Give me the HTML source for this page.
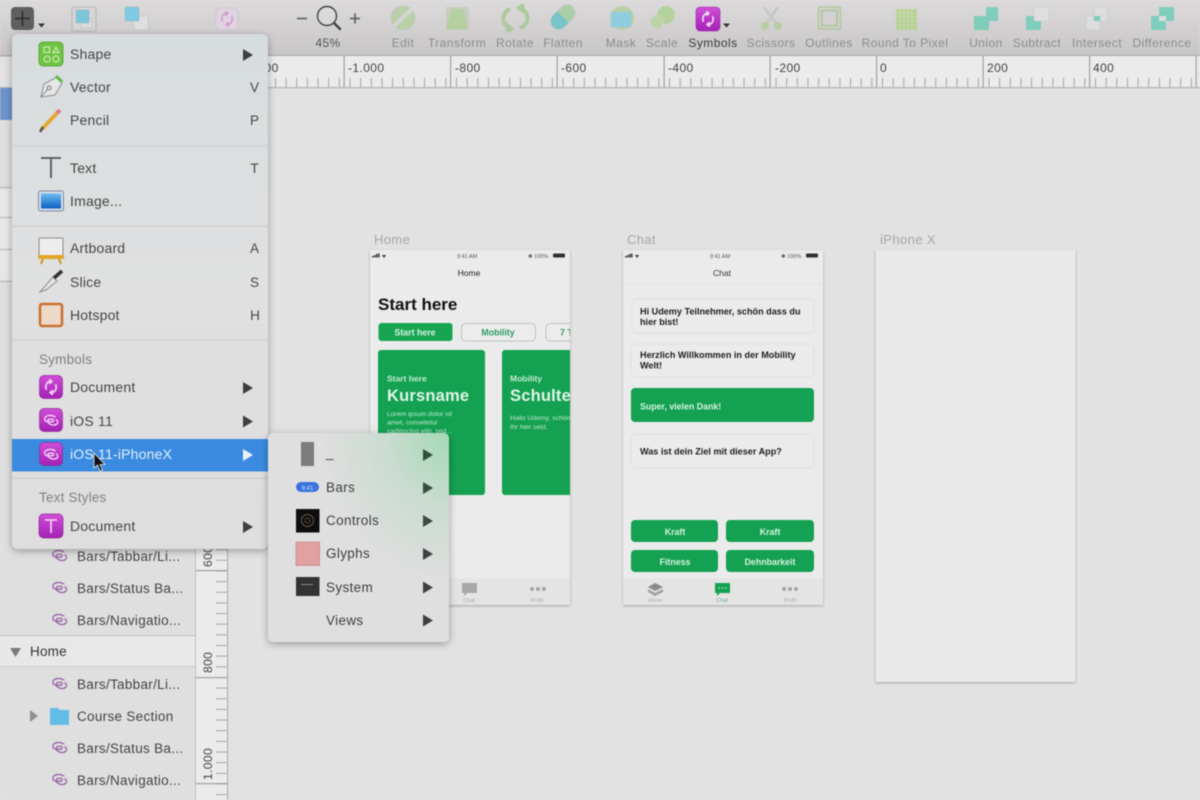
<!DOCTYPE html>
<html><head><meta charset="utf-8"><style>
html,body{margin:0;padding:0;width:1200px;height:800px;overflow:hidden;background:#e2e2e2}
svg{display:block;filter:blur(.45px)}
text{font-family:"Liberation Sans",sans-serif}
.tb{font-size:12px;fill:#8d8d8d;text-anchor:middle;letter-spacing:.45px}
.rl{font-size:12px;fill:#444;letter-spacing:.4px}
.m{font-size:14px;fill:#454545;letter-spacing:.2px}
.k{font-size:13.5px;fill:#454545;text-anchor:middle}
.h{font-size:13.5px;fill:#808080;letter-spacing:.2px}
.s{font-size:13.5px;fill:#3f3f3f;letter-spacing:.35px}
.ab{font-size:13px;fill:#a6a6a6;letter-spacing:.4px}
.cb{font-size:9.1px;font-weight:bold;fill:#1d1d1d}
.gb{font-size:8.8px;font-weight:bold;fill:#d6f2df;text-anchor:middle}
.st{font-size:5.5px;fill:#555}
.tl{font-size:5.5px;fill:#aaa;text-anchor:middle}
</style></head><body>
<svg width="1200" height="800" viewBox="0 0 1200 800" xmlns="http://www.w3.org/2000/svg">
<defs>
<clipPath id="homeclip"><rect x="370" y="250" width="200" height="355"/></clipPath>
<linearGradient id="tbg" x1="0" y1="0" x2="0" y2="1"><stop offset="0" stop-color="#dcdadb"/><stop offset="1" stop-color="#c8c6c7"/></linearGradient>
<linearGradient id="menu" x1="0" y1="0" x2="0" y2="1"><stop offset="0" stop-color="#d7dcdf"/><stop offset=".25" stop-color="#dcdfe0"/><stop offset=".5" stop-color="#e0e0e0"/><stop offset="1" stop-color="#dedede"/></linearGradient>
<radialGradient id="sub" cx="1" cy="0" r=".72"><stop offset="0" stop-color="#a3d9b5"/><stop offset=".5" stop-color="#cbdcd1"/><stop offset="1" stop-color="#dfdfdf"/></radialGradient>
<linearGradient id="pur" x1="0" y1="0" x2="0" y2="1"><stop offset="0" stop-color="#d04fd8"/><stop offset="1" stop-color="#a521b5"/></linearGradient>
<linearGradient id="sea" x1="0" y1="0" x2="0" y2="1"><stop offset="0" stop-color="#6ebdf0"/><stop offset="1" stop-color="#0a5fc4"/></linearGradient>
<pattern id="hticks" x="8.7" y="0" width="10.65" height="40" patternUnits="userSpaceOnUse"><rect width="1" height="40" fill="#a5a5a5"/></pattern>
<pattern id="vticks" x="0" y="6" width="40" height="10.65" patternUnits="userSpaceOnUse"><rect width="40" height="1" fill="#a5a5a5"/></pattern>
<filter id="sh" x="-15%" y="-15%" width="130%" height="130%"><feDropShadow dx="0" dy="2" stdDeviation="4" flood-color="#000" flood-opacity=".33"/></filter>
<filter id="sh2" x="-5%" y="-5%" width="110%" height="110%"><feDropShadow dx="0" dy="1" stdDeviation="1.2" flood-color="#000" flood-opacity=".28"/></filter>
<symbol id="arrow" viewBox="0 0 10 12"><path d="M0 0L10 6L0 12Z"/></symbol>
<symbol id="swirl" viewBox="0 0 18 14"><path d="M13.500 3.200C11 1.200 5.500 1 3 3.200C.8 5.200 1.800 8 5 8.800H10.500C12 8.800 12.500 6.200 10.500 5.800H7.500C5 5.800 4.800 8.800 7 10.700C9.500 12.900 14 13 16 10.800C17.200 9.400 16.600 7.300 14.800 6.500" fill="none" stroke="currentColor" stroke-width="1.500" stroke-linecap="round"/></symbol>
<symbol id="psym" viewBox="0 0 24 24"><rect x=".5" y=".5" width="23" height="23" rx="4.500" fill="url(#pur)" stroke="#8e2b97" stroke-width=".7"/><g color="#f4d6f6"><use href="#swirl" x="4" y="6" width="16" height="12.500"/></g></symbol>
<symbol id="loop" viewBox="0 0 24 24"><path d="M7 15C5 10 8 5.500 12 6M10 3.500L13 6L10 8.500M17 9C19 14 16 18.500 12 18M14 20.500L11 18L14 15.500" fill="none" stroke="currentColor" stroke-width="1.800"/></symbol>
</defs>

<!-- canvas -->
<rect width="1200" height="800" fill="#e2e2e2"/>

<!-- toolbar -->
<rect width="1200" height="55" fill="url(#tbg)"/>
<rect y="55" width="1200" height="1.500" fill="#ababab"/>

<!-- horizontal ruler -->
<rect x="195" y="56" width="1005" height="32" fill="#ebebeb"/>
<rect x="195" y="78" width="1005" height="9" fill="url(#hticks)"/>
<rect x="0" y="87" width="1200" height="1.200" fill="#b3b3b3"/>
<g fill="#a0a0a0">
<rect x="237" y="56" width="1.200" height="32"/><rect x="343.500" y="56" width="1.200" height="32"/><rect x="450" y="56" width="1.200" height="32"/><rect x="556.500" y="56" width="1.200" height="32"/><rect x="663.500" y="56" width="1.200" height="32"/><rect x="769.500" y="56" width="1.200" height="32"/><rect x="876" y="56" width="1.200" height="32"/><rect x="982.500" y="56" width="1.200" height="32"/><rect x="1089" y="56" width="1.200" height="32"/><rect x="1195.500" y="56" width="1.200" height="32"/>
</g>
<g class="rl">
<text class="rl" x="348" y="72">-1.000</text><text class="rl" x="455" y="72">-800</text><text class="rl" x="561" y="72">-600</text><text class="rl" x="668" y="72">-400</text><text class="rl" x="775" y="72">-200</text><text class="rl" x="880" y="72" fill="#222">0</text><text class="rl" x="987" y="72">200</text><text class="rl" x="1093" y="72">400</text><text class="rl" x="264.500" y="72">00</text>
</g>

<!-- sidebar -->
<rect x="0" y="88" width="195" height="712" fill="#dfdfdf"/>
<rect x="0" y="88" width="12" height="32" fill="#6e93cc"/>
<rect x="0" y="189" width="12" height="29" fill="#e7e7e7"/>
<rect x="0" y="218" width="12" height="31" fill="#e7e7e7"/>
<rect x="0" y="250" width="12" height="30" fill="#e7e7e7"/>
<rect x="0" y="187" width="12" height="1" fill="#b0b0b0"/><rect x="0" y="217" width="12" height="1" fill="#b0b0b0"/><rect x="0" y="249" width="12" height="1" fill="#b0b0b0"/><rect x="0" y="281" width="12" height="1" fill="#b0b0b0"/>
<rect x="0" y="636" width="195" height="30" fill="#e8e8e8"/>
<rect x="0" y="635" width="195" height="1.200" fill="#c4c4c4"/>
<rect x="0" y="666" width="195" height="1" fill="#cdcdcd"/>
<path d="M10 648H21L15.500 657Z" fill="#7a7a7a"/>
<text x="30" y="656" style="font-size:13.500px;fill:#333;letter-spacing:.2px">Home</text>
<g color="#9b6aa8">
<use href="#swirl" x="51" y="549" width="17" height="13"/>
<use href="#swirl" x="51" y="581" width="17" height="13"/>
<use href="#swirl" x="51" y="613" width="17" height="13"/>
<use href="#swirl" x="51" y="677" width="17" height="13"/>
<use href="#swirl" x="51" y="741" width="17" height="13"/>
<use href="#swirl" x="51" y="773" width="17" height="13"/>
</g>
<g style="font-size:13.500px;fill:#444;letter-spacing:.3px">
<text x="77" y="561">Bars/Tabbar/Li...</text>
<text x="77" y="593">Bars/Status Ba...</text>
<text x="77" y="625">Bars/Navigatio...</text>
<text x="77" y="689">Bars/Tabbar/Li...</text>
<text x="77" y="721">Course Section</text>
<text x="77" y="753">Bars/Status Ba...</text>
<text x="77" y="785">Bars/Navigatio...</text>
</g>
<path d="M30 710L38 716L30 722Z" fill="#8f8f8f"/>
<path d="M50 708H58L60 710H69V725H50Z" fill="#62bde6"/>

<!-- vertical ruler -->
<rect x="195" y="88" width="32" height="712" fill="#ebebeb"/>
<rect x="216" y="88" width="11" height="712" fill="url(#vticks)"/>
<rect x="195" y="88" width="1" height="712" fill="#c2c2c2"/>
<rect x="227" y="88" width="1.200" height="712" fill="#b3b3b3"/>
<rect x="195" y="570" width="32" height="1.200" fill="#a0a0a0"/>
<rect x="195" y="677" width="32" height="1.200" fill="#a0a0a0"/>
<rect x="195" y="783" width="32" height="1.200" fill="#a0a0a0"/>
<text class="rl" transform="translate(212 567) rotate(-90)">600</text>
<text class="rl" transform="translate(212 673) rotate(-90)">800</text>
<text class="rl" transform="translate(212 780) rotate(-90)">1.000</text>

<!-- artboard titles -->
<text class="ab" x="374" y="244">Home</text>
<text class="ab" x="627" y="244">Chat</text>
<text class="ab" x="880" y="244">iPhone X</text>

<!-- Home artboard -->
<rect x="370" y="250" width="200" height="355" fill="#ebebeb" filter="url(#sh2)"/>
<g clip-path="url(#homeclip)">
<g fill="#333"><rect x="372" y="256" width="1.500" height="1.500"/><rect x="374" y="255" width="1.500" height="2.500"/><rect x="376" y="254" width="1.500" height="3.500"/><rect x="378" y="253.500" width="1.500" height="4"/><path d="M382 255L386 255L384 258Z"/><rect x="553" y="253.500" width="12" height="4" rx="1"/></g>
<text class="st" x="457" y="258">9:41 AM</text>
<text class="st" x="528" y="258">✱ 100%</text>
<text x="469" y="276" style="font-size:8.500px;fill:#222;text-anchor:middle">Home</text>
<text x="378" y="310" style="font-size:17px;font-weight:bold;fill:#111">Start here</text>
<rect x="378.500" y="323" width="74" height="18" rx="3" fill="#17a554"/>
<text class="gb" x="415" y="335.500">Start here</text>
<rect x="461.500" y="323.500" width="74" height="17.500" rx="4" fill="#ececec" stroke="#b9c4bd"/>
<text x="498" y="335.500" style="font-size:8.800px;font-weight:bold;fill:#2c9a62;text-anchor:middle">Mobility</text>
<path d="M572 323.500H550a4 4 0 0 0-4 4v9.500a4 4 0 0 0 4 4H572" fill="#ececec" stroke="#b9c4bd"/>
<text x="560" y="335.500" style="font-size:8.800px;font-weight:bold;fill:#2c9a62">7 T</text>
<rect x="378" y="350" width="107" height="145" rx="3" fill="#14a151"/>
<path d="M572 350H505a3 3 0 0 0-3 3V492a3 3 0 0 0 3 3H572Z" fill="#14a151"/>
<text x="387" y="381.500" style="font-size:8.500px;font-weight:bold;fill:#c2ebd0">Start here</text>
<text x="387" y="401" style="font-size:16.500px;font-weight:bold;fill:#dff5e7;letter-spacing:.2px">Kursname</text>
<g style="font-size:6.800px;fill:#bfe7cd"><text x="387" y="416">Lorem ipsum dolor sit</text><text x="387" y="424.500">amet, consetetur</text><text x="387" y="433">sadipscing elitr, sed...</text></g>
<text x="510" y="381.500" style="font-size:8.500px;font-weight:bold;fill:#c2ebd0">Mobility</text>
<text x="510" y="401" style="font-size:16.500px;font-weight:bold;fill:#dff5e7;letter-spacing:.2px">Schulter</text>
<g style="font-size:6.800px;fill:#bfe7cd"><text x="510" y="420">Hallo Udemy, schön</text><text x="510" y="429">Ihr hier seid.</text></g>
<rect x="370" y="578" width="200" height="27" fill="#e4e4e4"/>
<path d="M462 583h15v10h-10l-3 3v-3h-2z" fill="#a8a8a8"/>
<text class="tl" x="469" y="602">Chat</text>
<g fill="#a5a5a5"><circle cx="532" cy="589" r="2"/><circle cx="538" cy="589" r="2"/><circle cx="544" cy="589" r="2"/></g>
<text class="tl" x="537" y="602">Profil</text>
</g>

<!-- Chat artboard -->
<rect x="623" y="250" width="200" height="355" fill="#ebebeb" filter="url(#sh2)"/>
<g fill="#333"><rect x="625" y="256" width="1.500" height="1.500"/><rect x="627" y="255" width="1.500" height="2.500"/><rect x="629" y="254" width="1.500" height="3.500"/><rect x="631" y="253.500" width="1.500" height="4"/><path d="M635 255L639 255L637 258Z"/><rect x="806" y="253.500" width="12" height="4" rx="1"/></g>
<text class="st" x="710" y="258">9:41 AM</text>
<text class="st" x="781" y="258">✱ 100%</text>
<text x="722" y="276" style="font-size:8.500px;fill:#333;text-anchor:middle">Chat</text>
<rect x="623" y="284" width="200" height="1" fill="#e2e2e2"/>
<rect x="632" y="299" width="182" height="34" rx="4" fill="#ebebeb" stroke="#e1e1e1"/>
<text class="cb" x="640" y="314.500">Hi Udemy Teilnehmer, schön dass du</text>
<text class="cb" x="640" y="325">hier bist!</text>
<rect x="631" y="344" width="183" height="33" rx="4" fill="#ebebeb" stroke="#e1e1e1"/>
<text class="cb" x="640" y="358">Herzlich Willkommen in der Mobility</text>
<text class="cb" x="640" y="368.500">Welt!</text>
<rect x="631" y="388" width="183" height="34" rx="4" fill="#14a151"/>
<text class="gb" x="640" y="409.500" style="text-anchor:start">Super, vielen Dank!</text>
<rect x="631" y="434" width="183" height="34" rx="4" fill="#ebebeb" stroke="#e1e1e1"/>
<text class="cb" x="640" y="454.500">Was ist dein Ziel mit dieser App?</text>
<rect x="631" y="520" width="87" height="22" rx="4" fill="#14a151"/>
<rect x="726" y="520" width="88" height="22" rx="4" fill="#14a151"/>
<rect x="631" y="550" width="87" height="22" rx="4" fill="#14a151"/>
<rect x="726" y="550" width="88" height="22" rx="4" fill="#14a151"/>
<text class="gb" x="675" y="535">Kraft</text><text class="gb" x="770" y="535">Kraft</text>
<text class="gb" x="675" y="565">Fitness</text><text class="gb" x="770" y="565">Dehnbarkeit</text>
<rect x="623" y="578" width="200" height="27" fill="#e4e4e4"/>
<path d="M655 583L663 587L655 591L648 587Z" fill="#8a8a8a"/><path d="M648 589L655 593L663 589V592L655 596L648 592Z" fill="#a0a0a0"/>
<text class="tl" x="655" y="602">Home</text>
<path d="M715 583h15v10h-10l-3 3v-3h-2z" fill="#14a151"/>
<g fill="#c9ecd6"><circle cx="719" cy="588" r=".8"/><circle cx="722.500" cy="588" r=".8"/><circle cx="726" cy="588" r=".8"/></g>
<text class="tl" x="722" y="602" style="fill:#6aa9a0">Chat</text>
<g fill="#a5a5a5"><circle cx="784" cy="589" r="2"/><circle cx="790" cy="589" r="2"/><circle cx="796" cy="589" r="2"/></g>
<text class="tl" x="790" y="602">Profil</text>

<!-- iPhone X artboard -->
<rect x="875.500" y="250" width="200" height="432" fill="#e9e9e9" filter="url(#sh2)"/>

<!-- toolbar icons -->
<rect x="11" y="7" width="23" height="23" rx="4" fill="#5f5f5f"/>
<path d="M22.500 11V26M15 18.500H30" stroke="#2c2c2c" stroke-width="1.600"/>
<path d="M38 23.500H45L41.500 27.500Z" fill="#333"/>
<rect x="72" y="7" width="24" height="24" rx="2" fill="#d6d6d6" stroke="#b5b5b5"/>
<rect x="81" y="18" width="11" height="10" fill="#dcdcdc" stroke="#bbb" stroke-width=".6"/>
<rect x="76" y="10" width="13" height="13" fill="#7cc5dc" stroke="#9ab6bf" stroke-width=".6"/>
<rect x="134" y="16" width="14" height="14" fill="#dedede" stroke="#c4c4c4" stroke-width=".6"/>
<rect x="125" y="7" width="14" height="14" fill="#7ecbe2" stroke="#9bbcc6" stroke-width=".6"/>
<rect x="216" y="8" width="22" height="22" rx="4" fill="#dfd3df" stroke="#cfc6cf"/>
<use href="#loop" x="216" y="8" width="22" height="22" color="#d39bd3"/>
<path d="M297 18.500H307M350 18.500H360M355 13.500V23.500" stroke="#666" stroke-width="1.800"/>
<circle cx="327" cy="16" r="9.500" fill="#dad8d9" stroke="#444" stroke-width="1.400"/>
<path d="M334 23L340 29" stroke="#444" stroke-width="2.600" stroke-linecap="round"/>
<text x="328" y="47" style="font-size:12px;fill:#555;text-anchor:middle;letter-spacing:.3px">45%</text>
<g opacity=".88">
<circle cx="403" cy="18" r="12" fill="#b6cfa2" stroke="#c6c6c6"/><path d="M394 26L412 9" stroke="#d5d5d5" stroke-width="4"/>
<rect x="446" y="7" width="23" height="23" fill="#c5cdbb"/><path d="M452 9H463L468 29H446Z" fill="#b2cf99"/>
<path d="M510 9C502 12 500 24 510 28M520 8C530 12 530 24 520 28M506 24L511 29L506 31M524 5L519 8L524 12" fill="none" stroke="#a9c996" stroke-width="4"/>
<g transform="rotate(-45 563 17)"><rect x="549" y="9" width="28" height="16" rx="8" fill="#a5cda0" stroke="#c4c4c4"/><path d="M549 17a8 8 0 0 1 8-8h6v16h-6a8 8 0 0 1-8-8z" fill="#6cc4c8"/></g>
<circle cx="622" cy="18" r="12" fill="#b4cf9f"/><rect x="611" y="12" width="20" height="15" fill="#86cde0" stroke="#aac6cc" stroke-width=".6"/>
<circle cx="666" cy="15" r="9" fill="#b0d293"/><circle cx="657" cy="22" r="6.500" fill="#b8d49f" stroke="#d0d0d0" stroke-width=".6"/>
</g>
<rect x="696" y="7" width="24" height="24" rx="4" fill="url(#pur)" stroke="#962ba0" stroke-width=".6"/>
<use href="#loop" x="697" y="8" width="22" height="22" color="#f4dcf7"/>
<path d="M723 23.500H730L726.500 27.500Z" fill="#333"/>
<g opacity=".88">
<path d="M764 7L776 23M778 7L767 23" stroke="#c5c5c5" stroke-width="2.500"/><circle cx="765" cy="26" r="4" fill="#b5cd9e"/><circle cx="778" cy="26" r="4" fill="#b5cd9e"/>
<rect x="818.500" y="7" width="22" height="22" fill="#cfd4c7" stroke="#afc59a" stroke-width="1.500"/><rect x="822" y="10.500" width="15" height="15" fill="#d3d1d2" stroke="#a9c192" stroke-width="1.500"/>
<rect x="896" y="9" width="21" height="21" fill="#b4d28c"/>
<path d="M900 9V30M904 9V30M908 9V30M912 9V30M896 13H917M896 17H917M896 21H917M896 25H917" stroke="#d1dbbb" stroke-width=".6"/>
<path d="M986 7h12v14h-9v9H974V16h12z" fill="#74cdb9"/>
<rect x="1026" y="16" width="15" height="14" rx="1" fill="#74cdb9"/><rect x="1034" y="7" width="15" height="14" rx="1" fill="#e0e0e0" stroke="#c9c9c9" stroke-width=".6"/>
<rect x="1086" y="16" width="14" height="14" rx="1" fill="#dedede" stroke="#c5c5c5" stroke-width=".6"/><rect x="1094" y="7" width="14" height="14" rx="1" fill="#dedede" stroke="#c5c5c5" stroke-width=".6"/><rect x="1094" y="16" width="6" height="5" fill="#74cdb9"/>
<rect x="1151" y="16" width="15" height="14" rx="1" fill="#74cdb9"/><rect x="1159" y="7" width="15" height="14" rx="1" fill="#74cdb9"/><rect x="1159" y="16" width="7" height="5" fill="#dedede"/>
</g>
<text class="tb" x="403" y="47">Edit</text>
<text class="tb" x="457" y="47">Transform</text>
<text class="tb" x="515" y="47">Rotate</text>
<text class="tb" x="563" y="47">Flatten</text>
<text class="tb" x="621" y="47">Mask</text>
<text class="tb" x="662" y="47">Scale</text>
<text class="tb" x="713" y="47" style="fill:#3a3a3a">Symbols</text>
<text class="tb" x="771" y="47">Scissors</text>
<text class="tb" x="829" y="47">Outlines</text>
<text class="tb" x="905" y="47">Round To Pixel</text>
<text class="tb" x="986" y="47">Union</text>
<text class="tb" x="1037" y="47">Subtract</text>
<text class="tb" x="1097" y="47">Intersect</text>
<text class="tb" x="1162" y="47">Difference</text>

<!-- main menu -->
<rect x="12" y="34" width="256" height="515" rx="6" fill="url(#menu)" filter="url(#sh)"/>
<g fill="#d0d0d0"><rect x="12" y="145" width="256" height="1.500"/><rect x="12" y="225.500" width="256" height="1.500"/><rect x="12" y="339.500" width="256" height="1.500"/><rect x="12" y="477.500" width="256" height="1.500"/></g>
<rect x="12" y="439" width="256" height="32.500" fill="#3a8be0"/>

<!-- shape -->
<rect x="39" y="42" width="24" height="24" rx="4" fill="#6fc443" stroke="#4f9e2c" stroke-width=".8"/>
<g fill="none" stroke="#d9f0c8" stroke-width="1"><rect x="44" y="47" width="5.500" height="5.500"/><path d="M56 47L59 52.500H53Z"/><circle cx="47" cy="59" r="3"/><circle cx="56" cy="59" r="3"/></g>
<!-- vector -->
<path d="M41 97L44 84L57 77L62 83L55 95Z" fill="#e6e6e6" stroke="#8f8f8f"/><path d="M56 76L62 82" stroke="#5cb84a" stroke-width="3"/><circle cx="49" cy="88" r="2" fill="none" stroke="#777"/><path d="M41 97L48 89" stroke="#777" stroke-width=".8"/>
<!-- pencil -->
<path d="M41.500 129.500L58 112" stroke="#e4a93a" stroke-width="4"/><path d="M40 132L43 127" stroke="#555" stroke-width="2.500"/><path d="M57 113L60 110" stroke="#e07a80" stroke-width="4"/>
<!-- text -->
<path d="M41 158H61M51 158V178" stroke="#555" stroke-width="1.800" fill="none"/>
<!-- image -->
<rect x="38.500" y="191" width="25" height="20" rx="2" fill="#d5dce6" stroke="#7e8aa0"/><rect x="41" y="193.500" width="20" height="15" fill="url(#sea)"/>
<!-- artboard -->
<rect x="39" y="238" width="24" height="19" rx="1" fill="#ededed" stroke="#8a8a8a"/><rect x="38" y="255" width="26" height="4" rx="1" fill="#e2a627"/><path d="M43 259L41 264M59 259L61 264" stroke="#d09520" stroke-width="2"/>
<!-- slice -->
<path d="M40 292L53 277L57 281L46 290Z" fill="#e5e5e5" stroke="#8e8e8e"/><path d="M54 278L62 271" stroke="#333" stroke-width="3.500"/>
<!-- hotspot -->
<rect x="40" y="304" width="22" height="22" rx="2" fill="#ecd9c8" stroke="#c9702f" stroke-width="2.500"/>
<!-- purple -->
<rect x="39.500" y="375.500" width="23" height="23" rx="4.500" fill="url(#pur)" stroke="#8e2b97" stroke-width=".7"/>
<use href="#loop" x="40" y="376" width="22" height="22" color="#f5dcf7"/>
<use href="#psym" x="39" y="408" width="24" height="24"/>
<use href="#psym" x="39" y="442" width="24" height="24"/>
<rect x="39" y="514" width="24" height="24" rx="4.500" fill="url(#pur)" stroke="#8e2b97" stroke-width=".7"/>
<path d="M45 520H57M51 520V533" stroke="#f5dcf7" stroke-width="1.600"/>

<g class="m">
<text class="m" x="70" y="59">Shape</text>
<text class="m" x="70" y="92">Vector</text>
<text class="m" x="70" y="125">Pencil</text>
<text class="m" x="70" y="173">Text</text>
<text class="m" x="70" y="206">Image...</text>
<text class="m" x="70" y="253">Artboard</text>
<text class="m" x="70" y="287">Slice</text>
<text class="m" x="70" y="320">Hotspot</text>
<text class="m" x="70" y="392">Document</text>
<text class="m" x="70" y="426">iOS 11</text>
<text x="70" y="459" style="font-size:14px;fill:#e4f0fb;letter-spacing:.2px">iOS 11-iPhoneX</text>
<text class="m" x="70" y="531">Document</text>
</g>
<text class="h" x="39" y="364">Symbols</text>
<text class="h" x="39" y="502">Text Styles</text>
<text class="k" x="254.500" y="92">V</text>
<text class="k" x="254.500" y="125">P</text>
<text class="k" x="254.500" y="173">T</text>
<text class="k" x="254.500" y="253">A</text>
<text class="k" x="254.500" y="287">S</text>
<text class="k" x="255" y="320">H</text>
<g fill="#3e3e3e">
<use href="#arrow" x="243" y="49" width="10" height="12"/>
<use href="#arrow" x="243" y="382" width="10" height="12"/>
<use href="#arrow" x="243" y="415.500" width="10" height="12"/>
<use href="#arrow" x="243" y="521" width="10" height="12"/>
</g>
<use href="#arrow" x="243" y="449" width="10" height="12" fill="#e8f2fc"/>

<!-- cursor -->
<path d="M94 453V468L97.500 465L100 471L102.500 470L100 464.500H105Z" fill="#111" stroke="#eee" stroke-width=".8"/>

<!-- submenu -->
<rect x="268" y="433" width="181" height="209" rx="5" fill="url(#sub)" filter="url(#sh)"/>
<rect x="301" y="442" width="13" height="24" fill="#7c7c7c"/>
<text x="326" y="457" class="s">_</text>
<rect x="296" y="482" width="23" height="10" rx="5" fill="#3a72e0"/>
<text x="307.500" y="490" style="font-size:6px;fill:#cfe0fa;text-anchor:middle">9:41</text>
<rect x="296" y="509" width="23.500" height="23.500" fill="#0e0e0e"/>
<circle cx="307.500" cy="520.500" r="6" fill="none" stroke="#6d5a48"/><circle cx="307.500" cy="520.500" r="2.500" fill="none" stroke="#6d5a48" stroke-width=".7"/>
<rect x="296" y="542" width="23.500" height="23.500" fill="#e2a1a1" stroke="#c78080" stroke-width=".7"/>
<rect x="296" y="577" width="23.500" height="19" fill="#333"/>
<rect x="301" y="584" width="12" height="1" fill="#888"/>
<g>
<text class="s" x="326" y="492">Bars</text>
<text class="s" x="326" y="525">Controls</text>
<text class="s" x="326" y="558">Glyphs</text>
<text class="s" x="326" y="592">System</text>
<text class="s" x="326" y="625">Views</text>
</g>
<g>
<use href="#arrow" x="423" y="449" width="10" height="12" fill="#2f4f3e"/>
<use href="#arrow" x="423" y="482" width="10" height="12" fill="#334e40"/>
<use href="#arrow" x="423" y="515" width="10" height="12" fill="#3c4a43"/>
<use href="#arrow" x="423" y="548" width="10" height="12" fill="#404040"/>
<use href="#arrow" x="423" y="581.500" width="10" height="12" fill="#404040"/>
<use href="#arrow" x="423" y="614.500" width="10" height="12" fill="#404040"/>
</g>
</svg>
</body></html>
